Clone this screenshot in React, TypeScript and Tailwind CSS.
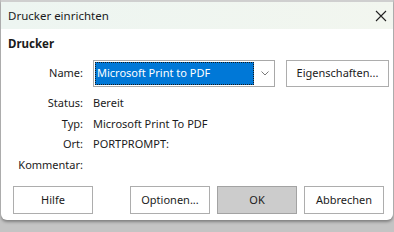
export default function App() {
  const rows = [
    { label: 'Status:', value: 'Bereit' },
    { label: 'Typ:', value: 'Microsoft Print To PDF' },
    { label: 'Ort:', value: 'PORTPROMPT:' },
    { label: 'Kommentar:', value: '' },
  ];

  return (
    <div
      className="w-[394px] h-[232px] bg-[#c4c4c4] flex flex-col text-[11px] text-[#1b1b1b] overflow-hidden"
      style={{ fontFamily: '"Noto Sans", "Open Sans", sans-serif' }}
    >
      {/* Dialog */}
      <div className="ml-[1px] mr-[1px] flex flex-col bg-white border-t-2 border-[#cfcfcf] rounded-b-[6px] shadow-[0_2px_3px_rgba(0,0,0,0.35)]">
        {/* Title bar */}
        <div className="h-[27px] flex items-center justify-between pl-[7px] pr-[6px] bg-gradient-to-r from-[#edf5f1] to-[#f2f6ef]">
          <span className="leading-none text-[11.5px]">Drucker einrichten</span>
          <svg width="12" height="12" viewBox="0 0 12 12" className="text-[#222]">
            <path d="M1 1 L11 11 M11 1 L1 11" stroke="currentColor" strokeWidth="1.1" fill="none" />
          </svg>
        </div>

        {/* Body */}
        <div className="flex flex-col pt-[8px] pb-[6px]">
          <div className="pl-[7px] h-[14px] leading-[14px] font-bold text-[11.5px]">Drucker</div>

          {/* Name row */}
          <div className="mt-[9px] flex items-center">
            <span className="w-[82px] text-right">Name:</span>
            <div className="ml-[10px] w-[182px] h-[27px] flex border border-[#a8a8a8] bg-white">
              <div className="flex-1 m-[1px] bg-[#0078d7] border border-dotted border-[#1a1a1a] flex items-center pl-[1px] text-white">
                Microsoft Print to PDF
              </div>
              <div className="w-[19px] flex items-center justify-center">
                <svg width="8" height="5" viewBox="0 0 8 5">
                  <path d="M0.5 0.5 L4 4 L7.5 0.5" stroke="#7a7a7a" strokeWidth="1" fill="none" />
                </svg>
              </div>
            </div>
            <button className="ml-[11px] w-[103px] h-[27px] border border-[#adadad] bg-white">
              Eigenschaften...
            </button>
          </div>

          {/* Info rows */}
          <div className="mt-[6px] flex flex-col">
            {rows.map((r) => (
              <div key={r.label} className="h-[20.5px] flex items-center">
                <span className="w-[82px] text-right">{r.label}</span>
                <span className="ml-[10px]">{r.value}</span>
              </div>
            ))}
          </div>

          {/* Buttons */}
          <div className="mt-[11px] flex items-center pl-[12px] pr-[9px]">
            <button className="w-[80px] h-[28px] border border-[#adadad] bg-white">Hilfe</button>
            <div className="flex-1" />
            <div className="flex gap-[7px]">
              <button className="w-[80px] h-[28px] border border-[#adadad] bg-white">Optionen...</button>
              <button className="w-[80px] h-[28px] border border-[#a3a3a3] bg-[#cccccc]">OK</button>
              <button className="w-[80px] h-[28px] border border-[#adadad] bg-white">Abbrechen</button>
            </div>
          </div>
        </div>
      </div>
    </div>
  );
}
